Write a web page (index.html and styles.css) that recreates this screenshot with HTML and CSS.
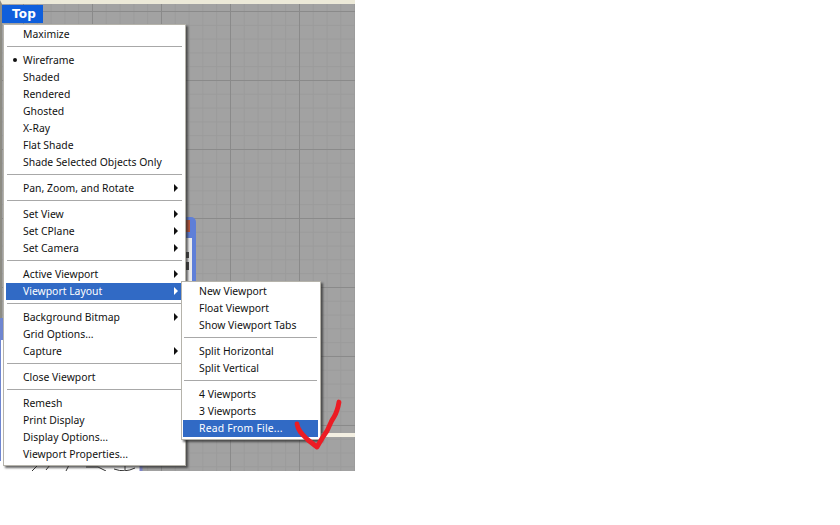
FILE: index.html
```html
<!DOCTYPE html>
<html lang="en">
<head>
<meta charset="utf-8">
<title>Viewport menu</title>
<link rel="stylesheet" href="styles.css">
</head>
<body>
<div class="shot">
  <div class="viewport">
    <div class="backwin">
      <div class="backwin-close"></div>
      <div class="backwin-body"><i class="tick t1"></i><i class="tick t2"></i></div>
    </div>
    <div class="leftwin"></div>
    <div class="rail"></div>
    <svg class="sketch" width="143" height="10" viewBox="0 0 143 10"><rect width="140" height="10" fill="#fff"/><path d="M32 10 L38 4 M46 9 L50 4 M66 10 L69 4 M86 6 L98 6 L106 10 M114 8 Q125 12 135 7 M125 5 L125 9" fill="none" stroke="#333" stroke-width="1"/><path d="M141 0V10" stroke="#7f86c8" stroke-width="3"/></svg>
  </div>
  <div class="tab">Top</div>

  <div class="menu main">
    <div class="row">Maximize</div>
    <div class="sep"></div>
    <div class="row"><span class="bullet"></span>Wireframe</div>
    <div class="row">Shaded</div>
    <div class="row">Rendered</div>
    <div class="row">Ghosted</div>
    <div class="row">X-Ray</div>
    <div class="row">Flat Shade</div>
    <div class="row">Shade Selected Objects Only</div>
    <div class="sep"></div>
    <div class="row sub">Pan, Zoom, and Rotate</div>
    <div class="sep"></div>
    <div class="row sub">Set View</div>
    <div class="row sub">Set CPlane</div>
    <div class="row sub">Set Camera</div>
    <div class="sep"></div>
    <div class="row sub">Active Viewport</div>
    <div class="row sub active">Viewport Layout</div>
    <div class="sep"></div>
    <div class="row sub">Background Bitmap</div>
    <div class="row">Grid Options...</div>
    <div class="row sub">Capture</div>
    <div class="sep"></div>
    <div class="row">Close Viewport</div>
    <div class="sep"></div>
    <div class="row">Remesh</div>
    <div class="row">Print Display</div>
    <div class="row">Display Options...</div>
    <div class="row">Viewport Properties...</div>
  </div>

  <div class="menu flyout">
    <div class="row">New Viewport</div>
    <div class="row">Float Viewport</div>
    <div class="row">Show Viewport Tabs</div>
    <div class="sep"></div>
    <div class="row">Split Horizontal</div>
    <div class="row">Split Vertical</div>
    <div class="sep"></div>
    <div class="row">4 Viewports</div>
    <div class="row">3 Viewports</div>
    <div class="row active spaced">Read From File...</div>
  </div>

  <svg class="check" width="60" height="60" viewBox="0 0 60 60"><path d="M6 27 C7 34 12 38 17 43 L26 50 C30 43 33 38 36 34 C39 28 40 24 43 20 C46 15 47 11 48 5" fill="none" stroke="#ec1c24" stroke-width="4.8" stroke-linecap="round" stroke-linejoin="round"/></svg>
</div>
</body>
</html>
```
FILE: styles.css
```css
html, body { margin: 0; padding: 0; background: #fff; }
.shot { position: relative; width: 840px; height: 525px; overflow: hidden; font-family: "Noto Sans", "Liberation Sans", sans-serif; font-size: 10.4px; color: #111; }
.viewport {
  position: absolute; left: 0; top: 0; width: 355px; height: 471px; box-sizing: border-box;
  border-top: 4px solid #ece9d8; border-left: 2px solid #8d8c84;
  background-color: #a2a2a2;
  background-image:
    linear-gradient(90deg, #8a8a8a 1px, transparent 1px),
    linear-gradient(#8a8a8a 1px, transparent 1px),
    linear-gradient(90deg, #9b9b9b 1px, transparent 1px),
    linear-gradient(#9b9b9b 1px, transparent 1px);
  background-size: 69px 69px, 69px 69px, 13.8px 13.8px, 13.8px 13.8px;
  background-position: 21px 7px, 21px 7px, 21px 7px, 21px 7px;
}
.backwin { position: absolute; left: 150px; top: 213px; width: 44px; height: 64px; background: #5f7fd8; border-radius: 0 5px 0 0; }
.backwin-close { position: absolute; right: 6px; top: 3px; width: 8px; height: 12px; background: #b8553a; }
.backwin-body { position: absolute; left: 0; right: 4px; top: 21px; bottom: 0; background: #ececec; }
.tick { position: absolute; right: 3px; width: 3px; background: #444; }
.t1 { top: 14px; height: 6px; }
.t2 { top: 24px; height: 8px; }
.leftwin { position: absolute; left: -2px; top: 314px; width: 3px; height: 153px; box-sizing: border-box; border-left: 1px solid #6f86d0; border-top: 22px solid #6f86d0; background: #fff; }
.rail { position: absolute; left: 318px; top: 429px; width: 35px; height: 4px; background: #f3efe2; }
.sketch { position: absolute; left: -2px; top: 457px; }
.tab { position: absolute; left: 2px; top: 5px; width: 41px; height: 18px; background: #0f5fdc; color: #fff; font-family: "DejaVu Sans", sans-serif; font-weight: 700; font-size: 12px; line-height: 18px; padding-left: 10px; box-sizing: border-box; letter-spacing: 0.2px; }
.menu { position: absolute; box-sizing: border-box; background: #fff; border: 1px solid #b5b3ab; padding: 1px 2px; box-shadow: 2px 2px 2px rgba(40,40,40,.7); }
.main { left: 3px; top: 24px; width: 183px; height: 442px; }
.flyout { left: 181px; top: 281px; width: 140px; height: 159px; padding-left: 1px; }
.row { position: relative; height: 17px; line-height: 16px; padding-left: 17px; white-space: nowrap; }
.flyout .row { padding-left: 16px; }
.spaced { letter-spacing: 0.2px; }
.sep { height: 9px; display: flex; align-items: center; padding: 0 1px; }
.sep::before { content: ""; flex: 1; height: 1px; background: #a8a8a8; margin-top: -3px; }
.active { background: #316ac5; color: #fff; }
.sub::after { content: ""; position: absolute; right: 5px; top: 4px; border-left: 4px solid currentColor; border-top: 4px solid transparent; border-bottom: 4px solid transparent; }
.bullet { position: absolute; left: 7px; top: 6px; width: 4px; height: 4px; border-radius: 50%; background: #111; }
.check { position: absolute; left: 291px; top: 397px; }
```
